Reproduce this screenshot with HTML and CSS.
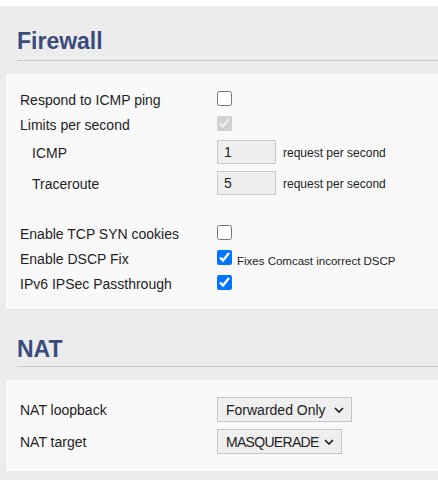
FILE: index.html
```html
<!DOCTYPE html>
<html>
<head>
<meta charset="utf-8">
<link rel="stylesheet" href="styles.css">
</head>
<body>
<div class="topstrip"></div>
<main class="page">
  <section class="section first">
    <h2 class="title">Firewall</h2>
    <div class="card">
      <div class="row"><span class="label">Respond to ICMP ping</span><input type="checkbox" class="cb"></div>
      <div class="row"><span class="label">Limits per second</span><input type="checkbox" class="cb" checked disabled></div>
      <div class="row tall"><span class="label sub">ICMP</span><input type="text" class="num" value="1"><span class="unit">request per second</span></div>
      <div class="row tall"><span class="label sub">Traceroute</span><input type="text" class="num" value="5"><span class="unit">request per second</span></div>
      <div class="spacer"></div>
      <div class="row"><span class="label">Enable TCP SYN cookies</span><input type="checkbox" class="cb"></div>
      <div class="row"><span class="label">Enable DSCP Fix</span><input type="checkbox" class="cb" checked><span class="note">Fixes Comcast incorrect DSCP</span></div>
      <div class="row"><span class="label">IPv6 IPSec Passthrough</span><input type="checkbox" class="cb" checked></div>
    </div>
  </section>
  <section class="section second">
    <h2 class="title">NAT</h2>
    <div class="card">
      <div class="row sel-row"><span class="label">NAT loopback</span>
        <span class="selwrap"><select class="sel wide"><option>Forwarded Only</option></select><svg class="chev" width="10" height="6" viewBox="0 0 10 6"><path d="M1 1 L5 5 L9 1" fill="none" stroke="#222" stroke-width="1.7"/></svg></span>
      </div>
      <div class="row sel-row"><span class="label">NAT target</span>
        <span class="selwrap"><select class="sel narrow"><option>MASQUERADE</option></select><svg class="chev" width="10" height="6" viewBox="0 0 10 6"><path d="M1 1 L5 5 L9 1" fill="none" stroke="#222" stroke-width="1.7"/></svg></span>
      </div>
    </div>
  </section>
</main>
</body>
</html>
```
FILE: styles.css
```css
* { box-sizing: border-box; }
html, body { margin: 0; padding: 0; }
body {
  background: #ececec;
  font-family: "Liberation Sans", Arial, sans-serif;
  font-size: 14px;
  color: #1e1e1e;
  height: 480px;
  overflow: hidden;
}
.topstrip { height: 6px; background: #ffffff; }
.section.first { padding-top: 21px; }
.section.second { padding-top: 26px; }
.title {
  margin: 0 0 13px 17px;
  padding: 0 0 5px 0;
  font-size: 23px;
  line-height: 28px;
  font-weight: bold;
  color: #3b4b7c;
  border-bottom: 1px solid #c8c8c8;
}
.section.second .title { padding-bottom: 3px; }
.card {
  margin-left: 6px;
  background: #f9f9f9;
  padding: 14px 0 12px 14px;
}
.section.second .card { padding-bottom: 13px; }
.row {
  display: flex;
  align-items: center;
  height: 25px;
  line-height: 25px;
}
.row.tall { height: 31px; }
.row.sel-row { height: 32px; }
.label { width: 197px; flex: none; white-space: nowrap; }
.label.sub { padding-left: 12px; }
.spacer { height: 22px; }
.cb {
  width: 15px;
  height: 15px;
  margin: 0 0 4px 0;
  flex: none;
}
.num {
  width: 59px;
  height: 24px;
  margin: 0 0 3px 0;
  padding: 0 6px;
  border: 1px solid #cacaca;
  background: #efefef;
  font-family: "Liberation Sans", Arial, sans-serif;
  font-size: 14px;
  color: #222;
  border-radius: 0;
}
.unit {
  margin-left: 7px;
  font-size: 12px;
  color: #222;
}
.note {
  margin-left: 5px;
  font-size: 11.5px;
  color: #222;
  padding-top: 3px;
}
.selwrap {
  position: relative;
  display: inline-block;
  height: 25px;
  margin-bottom: 1px;
}
.sel {
  appearance: none;
  -webkit-appearance: none;
  height: 25px;
  border: 1px solid #c6c6c6;
  border-radius: 0;
  background: #efefef;
  font-family: "Liberation Sans", Arial, sans-serif;
  font-size: 14px;
  color: #222;
  padding: 0 0 0 8px;
  margin: 0;
  display: block;
}
.sel.wide { width: 135px; }
.sel.narrow { width: 125px; letter-spacing: -0.7px; }
.chev {
  position: absolute;
  right: 8px;
  top: 10px;
  pointer-events: none;
}
```
